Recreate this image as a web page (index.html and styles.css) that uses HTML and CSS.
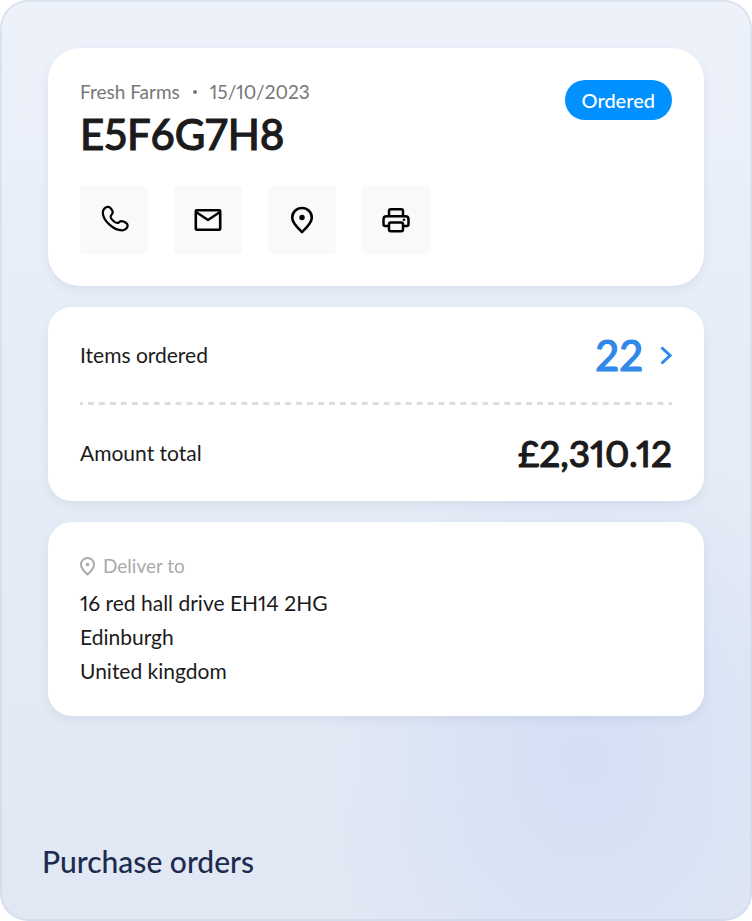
FILE: index.html
```html
<!DOCTYPE html>
<html lang="en">
<head>
    <meta charset="UTF-8">
    <meta name="viewport" content="width=device-width, initial-scale=1.0">
    <title>Purchase orders</title>
    <link rel="stylesheet" href="styles.css">
</head>
<body>
    <main class="panel">
        <section class="card order">
            <div class="order-head">
                <div>
                    <p class="meta"><span>Fresh Farms</span><span class="dot"></span><span>15/10/2023</span></p>
                    <h1>E5F6G7H8</h1>
                </div>
                <span class="badge">Ordered</span>
            </div>
            <div class="actions">
                <button type="button" aria-label="Call">
                    <svg width="32" height="32" viewBox="0 0 32 32" stroke-width="2.200">
                        <path d="M4.800 8.500C4.800 5.300 7.800 2.500 10.300 2.900C12.700 3.300 14.700 6.300 14.700 8.600C14.700 10.300 12.500 11 12.600 12.900C12.800 15.200 17 18.900 19.200 19C21 19.100 21.400 17 23.400 17.100C26 17.200 29.600 19.200 29.700 21.500C29.700 24 26.700 26.300 24 26.300C15.500 26.300 4.800 16.500 4.800 8.500Z"/>
                    </svg>
                </button>
                <button type="button" aria-label="Email">
                    <svg width="32" height="32" viewBox="0 0 32 32" stroke-width="2.600">
                        <rect x="3.800" y="6.300" width="24.400" height="19.400" rx="1"/>
                        <path d="M4 8L16 16L28 8" stroke-width="2.400"/>
                    </svg>
                </button>
                <button type="button" aria-label="Location">
                    <svg width="32" height="32" viewBox="0 0 32 32" stroke-width="2.600">
                        <path d="M16 28C13.500 25.500 6.200 19.500 6.200 13.500C6.200 8.200 10.600 4 16 4S25.800 8.200 25.800 13.500C25.800 19.500 18.500 25.500 16 28Z"/>
                        <circle class="fill" cx="16" cy="13.500" r="2.700"/>
                    </svg>
                </button>
                <button type="button" aria-label="Print">
                    <svg width="32" height="32" viewBox="0 0 32 32" stroke-width="2.500">
                        <path d="M9 12V7Q9 5.300 10.700 5.300H21.300Q23 5.300 23 7V12"/>
                        <path d="M9 22H5.200Q3.500 22 3.500 20.300V15.300Q3.500 12.300 6.500 12.300H25.500Q28.500 12.300 28.500 15.300V20.300Q28.500 22 26.800 22H23"/>
                        <rect x="9" y="18.500" width="14" height="8.700" rx="1.700"/>
                        <circle class="fill" cx="24" cy="15.800" r="1.300"/>
                    </svg>
                </button>
            </div>
        </section>

        <section class="card totals">
            <div class="row">
                <span>Items ordered</span>
                <a class="count" href="#items">22
                    <svg width="12" height="20" viewBox="0 0 12 20"><path d="M1.500 2.500L10 10.500L1.500 18.500"/></svg>
                </a>
            </div>
            <div class="divider"></div>
            <div class="row">
                <span>Amount total</span>
                <strong class="amount">£2,310.12</strong>
            </div>
        </section>

        <section class="card delivery">
            <h2>
                <svg width="15" height="19" viewBox="0 0 15 19">
                    <path d="M7.500 17.500C5.500 15.500 1 11.800 1 7.400C1 3.800 3.900 1 7.500 1S14 3.800 14 7.400C14 11.800 9.500 15.500 7.500 17.500Z"/>
                    <circle class="fill" cx="7.500" cy="7.500" r="1.800"/>
                </svg>
                Deliver to
            </h2>
            <address>
                16 red hall drive EH14 2HG<br>
                Edinburgh<br>
                United kingdom
            </address>
        </section>

        <h2 class="page-title">Purchase orders</h2>
    </main>
</body>
</html>
```
FILE: styles.css
```css
* {
    box-sizing: border-box;
}

body {
    margin: 0;
    background-color: white;
    color: #1b1b1b;
    font-family: Lato, sans-serif;
    font-size: 21px;
    font-variant-numeric: proportional-nums;
}

h1, h2, p {
    margin: 0;
}

svg {
    fill: none;
    stroke: currentColor;
    stroke-linejoin: round;
}

.fill {
    fill: currentColor;
    stroke: none;
}

.panel {
    display: flex;
    flex-direction: column;
    gap: 21px;
    min-height: 100vh;
    padding: 46px 46px 38px;
    border: 2px solid rgba(190, 200, 222, 0.35);
    border-radius: 28px;
    background:
        radial-gradient(ellipse 270px 330px at 78% 82%, #d4dff5 0%, rgba(212, 226, 244, 0) 100%) border-box,
        linear-gradient(#edf1fa, #e6edf7 40%, #e1e8f4) border-box;
}

.card {
    border-radius: 32px;
    background-color: white;
    box-shadow: 0 4px 10px rgba(50, 70, 120, 0.08);
}

.order {
    padding: 32px;
}

.order-head {
    display: flex;
    justify-content: space-between;
    align-items: flex-start;
}

.meta {
    display: flex;
    align-items: center;
    color: #777;
    font-size: 19px;
    line-height: 24px;
}

.dot {
    width: 4px;
    height: 4px;
    margin: 0 13px;
    border-radius: 50%;
    background-color: #777;
}

h1 {
    font-size: 42px;
    font-weight: 500;
    line-height: 60px;
    -webkit-text-stroke: 1px;
}

.badge {
    padding: 0 17px;
    border-radius: 20px;
    background-color: #0090ff;
    color: white;
    font-size: 20px;
    font-weight: 500;
    line-height: 40px;
}

.actions {
    display: flex;
    gap: 26px;
    margin-top: 22px;
}

.actions button {
    display: grid;
    place-items: center;
    width: 68px;
    height: 68px;
    padding: 0;
    border: 0;
    border-radius: 5px;
    background-color: #f9f9f9;
    color: black;
}

.totals {
    padding: 0 32px 1px;
    border-radius: 24px;
}

.row {
    display: flex;
    justify-content: space-between;
    align-items: center;
    height: 95px;
}

.divider {
    height: 3px;
    background: linear-gradient(90deg, #ddd 25%, transparent 25% 75%, #ddd 75%) 0 0 / 11px 3px round;
}

.count {
    display: flex;
    align-items: center;
    gap: 17px;
    color: #2f88ea;
    font-size: 42px;
    font-weight: 500;
    text-decoration: none;
    -webkit-text-stroke: 1px;
}

.count svg {
    stroke-width: 3;
    stroke-linejoin: miter;
}

.amount {
    font-size: 37px;
    font-weight: 500;
    -webkit-text-stroke: 1px;
}

.delivery {
    padding: 32px 32px 28px;
    border-radius: 24px;
}

.delivery h2 {
    display: flex;
    align-items: center;
    gap: 8px;
    margin-bottom: 8px;
    color: #aaa;
    font-size: 19px;
    font-weight: 400;
    line-height: 24px;
}

.delivery svg {
    stroke-width: 2;
}

address {
    font-style: normal;
    line-height: 34px;
}

.page-title {
    margin: auto 0 0 -6px;
    color: #1d2b50;
    font-size: 30px;
    font-weight: 500;
    line-height: 40px;
}
```
